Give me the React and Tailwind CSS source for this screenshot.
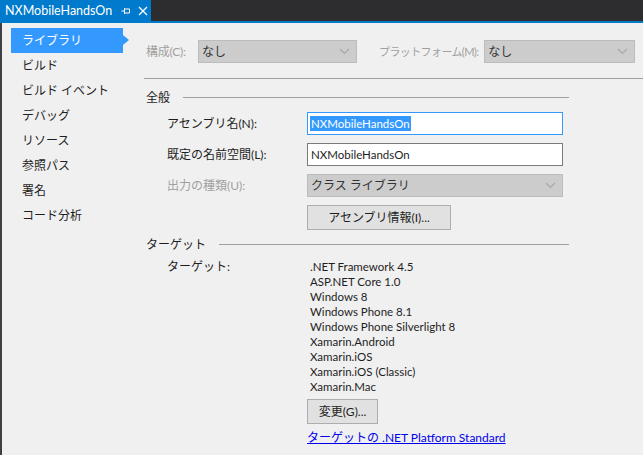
import { useState } from 'react';

const FONT = { fontFamily: 'Lato, "Noto Sans CJK JP", sans-serif' };

const navItems = ['ライブラリ', 'ビルド', 'ビルド イベント', 'デバッグ', 'リソース', '参照パス', '署名', 'コード分析'];

const targets = [
  '.NET Framework 4.5',
  'ASP.NET Core 1.0',
  'Windows 8',
  'Windows Phone 8.1',
  'Windows Phone Silverlight 8',
  'Xamarin.Android',
  'Xamarin.iOS',
  'Xamarin.iOS (Classic)',
  'Xamarin.Mac',
];

function Chevron() {
  return (
    <svg width="11" height="7" viewBox="0 0 11 7" className="shrink-0">
      <path d="M1 1 L5.5 5.5 L10 1" fill="none" stroke="#a8a8a8" strokeWidth="1.2" />
    </svg>
  );
}

function DisabledSelect({ value, className }) {
  return (
    <div className={`h-[23px] bg-[#cccccc] border border-[#bcbcbc] flex items-center justify-between pl-[3px] pr-[6px] ${className}`}>
      <span className="text-[#333]">{value}</span>
      <Chevron />
    </div>
  );
}

function SectionHeader({ title }) {
  return (
    <div className="flex items-center h-[18px] pl-[16px] pr-[74px]">
      <span className="text-[#1e1e1e]">{title}</span>
      <div className="flex-1 h-px bg-[#a0a0a0] ml-[13px]" />
    </div>
  );
}

export default function App() {
  const [active] = useState(0);

  return (
    <div className="w-[643px] h-[455px] bg-[#f0f0f0] flex flex-col overflow-hidden text-[12px] leading-[15px] whitespace-nowrap" style={FONT}>
      {/* Tab strip */}
      <div className="h-[21px] bg-[#2d2d30] flex shrink-0">
        <div className="w-[151px] bg-[#007acc] flex items-center pl-[5px] text-white">
          <span className="text-[12.5px]">NXMobileHandsOn</span>
          <svg width="10" height="10" viewBox="0 0 10 10" className="ml-[9px]">
            <path d="M0.5 5 H3.5 M3.5 2 V8 M3.5 3 H8.5 V7 H3.5" fill="none" stroke="#fff" strokeWidth="1" />
          </svg>
          <svg width="10" height="10" viewBox="0 0 10 10" className="ml-[7px]">
            <path d="M1 1 L9 9 M9 1 L1 9" stroke="#fff" strokeWidth="1.3" />
          </svg>
        </div>
      </div>
      <div className="h-[2px] bg-[#007acc] shrink-0" />

      <div className="flex flex-1">
        <div className="w-[2px] bg-[#3f3f46]" />

        {/* Sidebar */}
        <div className="w-[128px] pt-[5px]">
          {navItems.map((item, i) => (
            <div key={item} className="relative h-[25px] ml-[9px] w-[112px] flex items-center">
              {i === active && (
                <>
                  <div className="absolute inset-0 bg-[#3399ff]" />
                  <div className="absolute right-[-6px] top-[7px] w-0 h-0 border-y-[5px] border-y-transparent border-l-[6px] border-l-[#3399ff]" />
                </>
              )}
              <span className={`relative pl-[11px] ${i === active ? 'text-white' : 'text-[#1e1e1e]'}`}>{item}</span>
            </div>
          ))}
        </div>

        {/* Main */}
        <div className="flex-1 pt-[17px]">
          <div className="flex items-center h-[23px] pr-[8px]">
            <span className="ml-[16px] w-[52px] shrink-0 text-[#a0a0a0] tracking-[-0.3px]">構成(C):</span>
            <DisabledSelect value="なし" className="w-[159px] shrink-0" />
            <span className="ml-[22px] mr-[6px] shrink-0 text-[#a0a0a0] text-[11px] tracking-[-0.6px]">プラットフォーム(M):</span>
            <DisabledSelect value="なし" className="flex-1 min-w-0" />
          </div>

          <div className="h-px bg-[#a0a0a0] ml-[14px] mt-[15px]" />

          <div className="mt-[9px]">
            <SectionHeader title="全般" />
          </div>

          <div className="grid grid-cols-[177px_256px] items-center gap-y-[8px] mt-[6px]">
            <span className="pl-[37px] text-[#1e1e1e]">アセンブリ名(N):</span>
            <div className="h-[23px] bg-white border border-[#3399ff] flex items-center pl-[2px]">
              <span className="bg-[#3399ff] text-white px-px text-[11.5px]">NXMobileHandsOn</span>
            </div>

            <span className="pl-[37px] text-[#1e1e1e]">既定の名前空間(L):</span>
            <div className="h-[23px] bg-white border border-[#7a7a7a] flex items-center pl-[3px] text-[#1e1e1e] text-[11.5px]">
              NXMobileHandsOn
            </div>

            <span className="pl-[37px] text-[#a0a0a0]">出力の種類(U):</span>
            <DisabledSelect value="クラス ライブラリ" className="w-[256px]" />

            <span />
            <button className="w-[144px] h-[25px] bg-[#e1e1e1] border border-[#adadad] text-[#1e1e1e] flex items-center justify-center">
              アセンブリ情報(I)...
            </button>
          </div>

          <div className="mt-[5px]">
            <SectionHeader title="ターゲット" />
          </div>

          <div className="grid grid-cols-[177px_256px] mt-[6px]">
            <span className="pl-[37px] text-[#1e1e1e]">ターゲット:</span>
            <div className="pl-[3px] text-[#1e1e1e] text-[11.5px]">
              {targets.map((t) => (
                <div key={t}>{t}</div>
              ))}
            </div>

            <span />
            <button className="mt-[5px] w-[71px] h-[25px] bg-[#e1e1e1] border border-[#adadad] text-[#1e1e1e] flex items-center justify-center">
              変更(G)...
            </button>

            <span />
            <a href="#" className="mt-[6px] text-[#0000ee] underline">ターゲットの .NET Platform Standard</a>
          </div>
        </div>
      </div>
    </div>
  );
}
